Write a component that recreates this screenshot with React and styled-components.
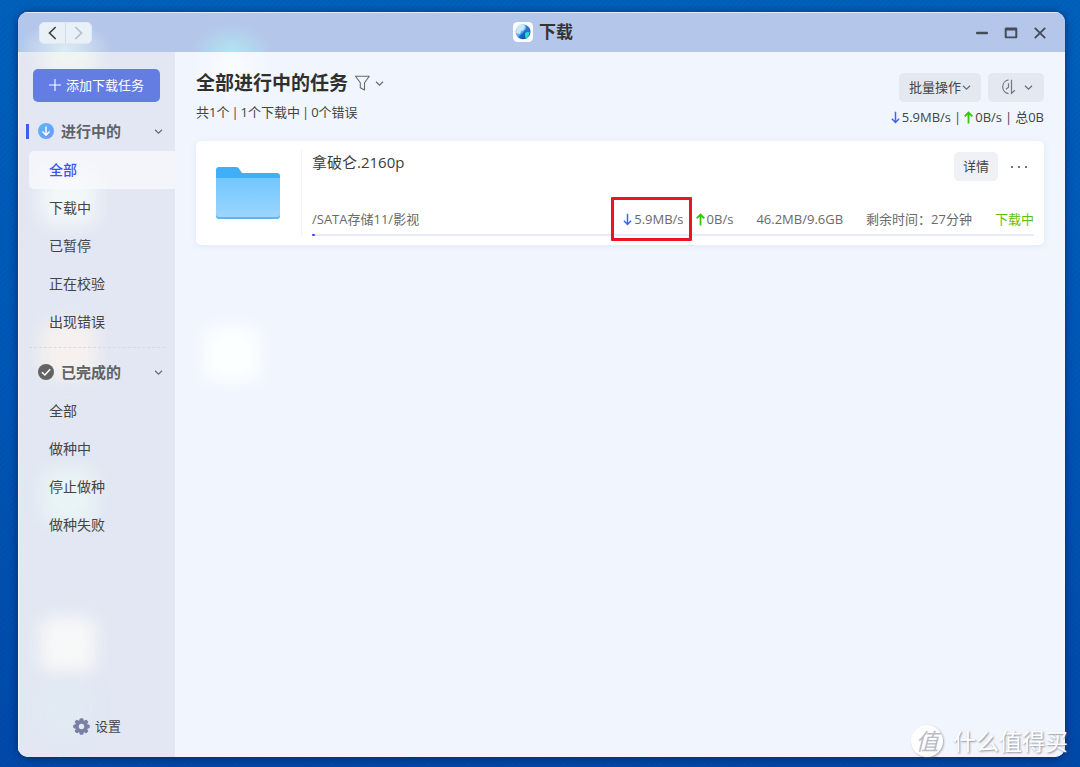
import React, { useState } from 'react';
import styled, { createGlobalStyle } from 'styled-components';

const GlobalStyle = createGlobalStyle`
    * {
        box-sizing: border-box;
    }
    body {
        margin: 0;
        font-family: "Open Sans", "Noto Sans CJK SC", sans-serif;
        font-size: 13px;
        line-height: 20px;
        color: #444;
    }
    button {
        font: inherit;
        color: inherit;
        border: 0;
        padding: 0;
        cursor: pointer;
    }
    a {
        color: inherit;
        text-decoration: none;
    }
    h1, h2, p, ul {
        margin: 0;
        padding: 0;
    }
    svg {
        display: block;
        flex: none;
    }
`

const Desktop = styled.div`
    position: relative;
    display: flex;
    min-height: 100vh;
    padding: 12px 15px 10px 18px;
    background:
        repeating-linear-gradient(135deg, rgba(0, 20, 90, 0.04) 0 2px, transparent 2px 4px),
        linear-gradient(#0061bb, #0057b5 50%, #0049a9);
`

const Window = styled.div`
    flex: 1;
    display: flex;
    flex-direction: column;
    border-radius: 10px;
    overflow: hidden;
    background: #f1f5fe;
    box-shadow: 0 1px 8px rgba(0, 15, 70, 0.6);
`

const TitleBar = styled.header`
    display: grid;
    grid-template-columns: 1fr auto 1fr;
    align-items: center;
    height: 40px;
    padding: 0 18px 0 21px;
    border-top: 1px solid #e3ebf8;
    background:
        radial-gradient(ellipse 40px 28px at 214px 40px, rgba(176, 232, 242, 0.9), transparent),
        radial-gradient(ellipse 46px 28px at 47px 36px, rgba(224, 240, 244, 0.9), transparent),
        #b4c7ea;
`

const NavButtons = styled.div`
    display: flex;
    width: 53px;
    border: 1px solid #dfe8f3;
    border-radius: 5px;
    overflow: hidden;
    background: #e9f1f8;
`

const NavButton = styled.button`
    flex: 1;
    display: flex;
    align-items: center;
    justify-content: center;
    height: 20px;
    background: none;
    color: ${props => props.disabled ? '#b9bec5' : '#444'};
    & + & {
        border-left: 1px solid #d3dce8;
    }
`

const AppTitle = styled.h1`
    display: flex;
    align-items: center;
    gap: 6px;
    padding-bottom: 2px;
    font-size: 17px;
    line-height: 24px;
    font-weight: 600;
    color: #333;
`

const WindowButtons = styled.div`
    display: flex;
    justify-content: flex-end;
    gap: 15px;
    color: #454b5a;
`

const WindowButton = styled.button`
    background: none;
`

const Body = styled.div`
    flex: 1;
    display: flex;
`

const Sidebar = styled.aside`
    position: relative;
    isolation: isolate;
    overflow: hidden;
    display: flex;
    flex-direction: column;
    width: 157px;
    flex: none;
    padding-top: 17px;
    border-left: 1px solid #f2f5fb;
    background: #e2e7f3;
`

// soft light spots of the wallpaper icons behind the frosted panels
const Glow = styled.span`
    position: absolute;
    z-index: -1;
    left: ${props => props.$left}px;
    top: ${props => props.$top}px;
    width: 56px;
    height: 56px;
    border-radius: 12px;
    background: ${props => props.$color};
    filter: blur(9px);
`

const AddButton = styled.button`
    display: flex;
    align-items: center;
    justify-content: center;
    gap: 5px;
    height: 33px;
    margin: 0 15px 10px 14px;
    padding-bottom: 2px;
    border-radius: 5px;
    background: #637de2;
    color: #fff;
`

const GroupHeader = styled.button`
    position: relative;
    display: flex;
    align-items: center;
    gap: 7px;
    width: 100%;
    height: 38px;
    padding: 0 12px 0 19px;
    background: none;
    font-size: 15px;
    font-weight: 700;
    color: #626262;
    ${props => props.$current && `
        &::before {
            content: "";
            position: absolute;
            left: 7px;
            top: 12px;
            width: 3px;
            height: 15px;
            background: #3f5bf6;
        }
    `}
    & > svg:last-child {
        margin-left: auto;
    }
`

const ItemList = styled.ul`
    list-style: none;
    padding: 1px 0 0 10px;
`

const Item = styled.a`
    display: block;
    padding-left: 20px;
    border-radius: 5px 0 0 5px;
    font-size: 14px;
    line-height: 38px;
    font-weight: ${props => props.$active ? 500 : 400};
    color: ${props => props.$active ? '#3d55f5' : '#444'};
    background: ${props => props.$active ? 'rgba(248, 250, 252, 0.75)' : 'none'};
`

const Divider = styled.hr`
    width: 136px;
    margin: 6px 0 5px 10px;
    border: 0;
    border-top: 1px dashed #d6d9e0;
`

const SettingsButton = styled.button`
    display: flex;
    align-items: center;
    justify-content: center;
    gap: 5px;
    margin: auto 0 21px;
    background: none;
`

const Main = styled.main`
    position: relative;
    isolation: isolate;
    flex: 1;
    min-width: 0;
    padding: 17px 21px;
    background:
        radial-gradient(ellipse 40px 34px at 57px 16px, rgba(250, 254, 255, 0.9), transparent),
        #f1f5fe;
`

const PageHead = styled.div`
    display: flex;
    justify-content: space-between;
    height: 72px;
`

const HeadLeft = styled.div`
    display: flex;
    flex-direction: column;
    gap: 5px;
`

const PageTitle = styled.h2`
    font-size: 19px;
    line-height: 28px;
    font-weight: 700;
    color: #2f2f2f;
`

const TitleRow = styled.div`
    display: flex;
    align-items: center;
    gap: 6px;
`

const FilterButton = styled.button`
    display: flex;
    align-items: center;
    gap: 4px;
    background: none;
`

const HeadRight = styled.div`
    display: flex;
    flex-direction: column;
    align-items: flex-end;
    gap: 5px;
    padding-top: 4px;
`

const ButtonRow = styled.div`
    display: flex;
    gap: 7px;
`

const GreyButton = styled.button`
    display: flex;
    align-items: center;
    justify-content: center;
    gap: ${props => props.$gap || 1}px;
    height: 29px;
    padding: 0 ${props => props.$pad || 9}px 1px;
    border-radius: 5px;
    background: ${props => props.$light ? '#f0f1f6' : '#e4e8f1'};
`

const Stats = styled.p`
    display: flex;
    gap: ${props => props.$gap}px;
`

const Speed = styled.span`
    position: relative;
    display: flex;
    align-items: center;
    gap: 2px;
`

const Card = styled.article`
    display: flex;
    gap: 21px;
    padding: 9px 10px 9px 20px;
    border-radius: 5px;
    background: #fff;
    box-shadow: 0 1px 6px rgba(90, 115, 170, 0.1);
    & > svg {
        align-self: center;
    }
`

const TaskBody = styled.div`
    flex: 1;
    display: flex;
    flex-direction: column;
    justify-content: space-between;
    min-height: 86px;
    padding-left: 10px;
    border-left: 1px solid #f0f2f6;
`

const TaskTop = styled.div`
    display: flex;
    justify-content: space-between;
    align-items: flex-start;
    padding-top: 2px;
`

const TaskName = styled.h2`
    font-size: 15px;
    line-height: 20px;
    font-weight: 400;
    color: #3c3c3c;
`

const TaskActions = styled.div`
    display: flex;
    align-items: center;
    gap: 12px;
`

const MoreButton = styled.button`
    background: none;
    padding-right: 6px;
`

const TaskInfo = styled.div`
    display: flex;
    gap: 23px;
    margin-bottom: 5px;
    color: #6a6a6a;
`

const Path = styled.span`
    flex: 1;
`

const Speeds = styled.span`
    display: flex;
    gap: 12px;
`

const State = styled.span`
    color: #5fbf0c;
`

const Highlight = styled.span`
    position: absolute;
    inset: -12px -8px -12px -12px;
    border: 3px solid #ec1420;
    border-radius: 1px;
    pointer-events: none;
`

const Track = styled.div`
    height: 2px;
    border-radius: 1px;
    background: #e6ebf4;
`

const Bar = styled.div`
    height: 2px;
    min-width: 3px;
    border-radius: 1px;
    background: #3448fa;
`

const Watermark = styled.div`
    position: absolute;
    right: 12px;
    bottom: 10px;
    display: flex;
    align-items: center;
    gap: 10px;
    font-size: 23px;
    line-height: 32px;
    color: #fff;
    text-shadow: 1px 1px 2px rgba(90, 95, 110, 0.7);
    pointer-events: none;
`

const Seal = styled.span`
    width: 32px;
    height: 32px;
    border-radius: 50%;
    background: #fff;
    box-shadow: 1px 1px 2px rgba(90, 95, 110, 0.5);
    color: #b9bcc5;
    font-family: "Noto Sans CJK SC", sans-serif;
    font-size: 23px;
    font-style: italic;
    line-height: 30px;
    text-align: center;
    text-shadow: none;
`

const Chevron = () => (
    <svg width="9" height="9" viewBox="0 0 9 9" fill="none" stroke="#656b7d" strokeWidth="1.2">
        <path d="M1 2.8L4.5 6.2L8 2.8" />
    </svg>
)

const Arrow = ({ up }) => (
    <svg width="9" height="13" viewBox="0 0 9 13" fill="none" stroke={up ? '#35c50b' : '#3d63fb'} strokeWidth={up ? 1.8 : 1.5}>
        {up ? <path d="M4.5 12.5V1.6M.7 5.4L4.5 1.5L8.3 5.4" /> : <path d="M4.5 .8V11.4M.9 7.8L4.5 11.5L8.1 7.8" />}
    </svg>
)

const GlobeIcon = () => (
    <svg width="20" height="20" viewBox="0 0 20 20">
        <defs>
            <linearGradient id="globe" x1="0" y1="0" x2="1" y2="1">
                <stop offset="0" stopColor="#b8e1fb" />
                <stop offset=".48" stopColor="#5fadea" />
                <stop offset=".55" stopColor="#1769cb" />
                <stop offset="1" stopColor="#133f9e" />
            </linearGradient>
        </defs>
        <rect width="20" height="20" rx="4.5" fill="#fbfcfe" />
        <circle cx="10" cy="9.8" r="7.5" fill="url(#globe)" />
        <path d="M3.6 6L7 3L11 2.8L12 5L11 8L8 9L7 12L3.2 11Z" fill="#d6edfc" opacity=".85" />
        <path d="M12.5 3Q17 5 16.8 11Q14 13 12.5 11Q14.5 8 12.5 3Z" fill="#2b74d2" />
        <path d="M12 11Q14 9.5 16.6 10.4L15.8 14L13.4 17Q11.5 15 12 11Z" fill="#27d6c9" />
    </svg>
)

const FolderIcon = () => (
    <svg width="64" height="52" viewBox="0 0 64 52">
        <defs>
            <linearGradient id="folder" x1="0" y1="0" x2="0" y2="1">
                <stop offset="0" stopColor="#72c7ff" />
                <stop offset="1" stopColor="#9bd5ff" />
            </linearGradient>
        </defs>
        <path d="M0 3Q0 0 3 0H20.5Q22 0 23 1.5L26 6H61Q64 6 64 9V20H0Z" fill="#40affa" />
        <path d="M0 11H64V49Q64 52 61 52H3Q0 52 0 49Z" fill="#5eb5ef" />
        <path d="M0 11H64V47Q64 50 61 50H3Q0 50 0 47Z" fill="url(#folder)" />
    </svg>
)

const GearIcon = () => (
    <svg width="17" height="17" viewBox="0 0 17 17" fill="#7a80a4">
        {[0, 45, 90, 135].map(angle => (
            <rect key={angle} x="6.5" y=".2" width="4" height="16.6" rx="1.4" transform={`rotate(${angle} 8.5 8.5)`} />
        ))}
        <circle cx="8.5" cy="8.5" r="6.4" />
        <circle cx="8.5" cy="8.5" r="2.7" fill="#e3e8f3" />
    </svg>
)

const active = ['全部', '下载中', '已暂停', '正在校验', '出现错误'];
const finished = ['全部', '做种中', '停止做种', '做种失败'];

function Group({ title, icon, items, prefix, selected, onSelect }) {
    const [open, setOpen] = useState(true);
    return (
        <div>
            <GroupHeader $current={selected.startsWith(prefix)} aria-expanded={open} onClick={() => setOpen(!open)}>
                {icon}
                <span>{title}</span>
                <Chevron />
            </GroupHeader>
            {open && (
                <ItemList>
                    {items.map((name, i) => (
                        <li key={name}>
                            <Item
                                href={`#${prefix}${i}`}
                                $active={selected === `${prefix}${i}`}
                                onClick={() => onSelect(`${prefix}${i}`)}
                            >
                                {name}
                            </Item>
                        </li>
                    ))}
                </ItemList>
            )}
        </div>
    )
}

function Task({ name, path, done, total, progress }) {
    return (
        <Card>
            <FolderIcon />
            <TaskBody>
                <TaskTop>
                    <TaskName>{name}</TaskName>
                    <TaskActions>
                        <GreyButton $light>详情</GreyButton>
                        <MoreButton aria-label="更多">
                            <svg width="18" height="4" viewBox="0 0 18 4" fill="#555">
                                <circle cx="2" cy="2" r="1.1" />
                                <circle cx="9" cy="2" r="1.1" />
                                <circle cx="16" cy="2" r="1.1" />
                            </svg>
                        </MoreButton>
                    </TaskActions>
                </TaskTop>
                <div>
                    <TaskInfo>
                        <Path>{path}</Path>
                        <Speeds>
                            <Speed><Arrow />5.9MB/s<Highlight /></Speed>
                            <Speed><Arrow up />0B/s</Speed>
                        </Speeds>
                        <span>{done}/{total}</span>
                        <span>剩余时间：27分钟</span>
                        <State>下载中</State>
                    </TaskInfo>
                    <Track role="progressbar" aria-label={name} aria-valuenow={progress}>
                        <Bar style={{ width: `${progress}%` }} />
                    </Track>
                </div>
            </TaskBody>
        </Card>
    )
}

export default function App() {
    const [selected, setSelected] = useState('active0');

    return (
        <Desktop>
            <GlobalStyle />
            <Window>
                <TitleBar>
                    <NavButtons>
                        <NavButton aria-label="后退">
                            <svg width="9" height="14" viewBox="0 0 9 14" fill="none" stroke="currentColor" strokeWidth="1.7">
                                <path d="M7.7 1L1.5 7L7.7 13" />
                            </svg>
                        </NavButton>
                        <NavButton aria-label="前进" disabled>
                            <svg width="9" height="14" viewBox="0 0 9 14" fill="none" stroke="currentColor" strokeWidth="1.7">
                                <path d="M1.3 1L7.5 7L1.3 13" />
                            </svg>
                        </NavButton>
                    </NavButtons>
                    <AppTitle><GlobeIcon />下载</AppTitle>
                    <WindowButtons>
                        <WindowButton aria-label="最小化">
                            <svg width="14" height="14" viewBox="0 0 14 14"><rect x="1" y="5.7" width="12" height="2.6" rx="1" fill="currentColor" /></svg>
                        </WindowButton>
                        <WindowButton aria-label="最大化">
                            <svg width="14" height="14" viewBox="0 0 14 14" fill="currentColor">
                                <path fillRule="evenodd" d="M2 1.5H12Q13.3 1.5 13.3 2.8V11Q13.3 12.3 12 12.3H2Q.7 12.3 .7 11V2.8Q.7 1.5 2 1.5ZM2.7 4.5V10.4H11.3V4.5Z" />
                            </svg>
                        </WindowButton>
                        <WindowButton aria-label="关闭">
                            <svg width="14" height="14" viewBox="0 0 14 14" fill="none" stroke="currentColor" strokeWidth="1.9">
                                <path d="M1.8 1.8L12.2 12.2M12.2 1.8L1.8 12.2" />
                            </svg>
                        </WindowButton>
                    </WindowButtons>
                </TitleBar>
                <Body>
                    <Sidebar>
                        <Glow $left={22} $top={-32} $color="#f0f4f2" />
                        <Glow $left={22} $top={118} $color="#f2f7f8" />
                        <Glow $left={22} $top={270} $color="#f6f1ef" />
                        <Glow $left={22} $top={416} $color="#e8f4f5" />
                        <Glow $left={21} $top={565} $color="#f7f8f8" />
                        <Glow $left={19} $top={630} $color="#e1eaf3" />
                        <AddButton>
                            <svg width="12" height="12" viewBox="0 0 12 12" stroke="#fff" strokeWidth="1.1"><path d="M6 0V12M0 6H12" /></svg>
                            添加下载任务
                        </AddButton>
                        <Group
                            title="进行中的"
                            prefix="active"
                            items={active}
                            selected={selected}
                            onSelect={setSelected}
                            icon={
                                <svg width="16" height="16" viewBox="0 0 16 16" fill="none" stroke="#fff" strokeWidth="1.4">
                                    <defs>
                                        <linearGradient id="down" x1="0" y1="0" x2="1" y2="1">
                                            <stop offset="0" stopColor="#57b9fa" />
                                            <stop offset="1" stopColor="#7196fb" />
                                        </linearGradient>
                                    </defs>
                                    <circle cx="8" cy="8" r="8" fill="url(#down)" stroke="none" />
                                    <path d="M8 3.4V12M4.4 8.6L8 12.2L11.6 8.6" />
                                </svg>
                            }
                        />
                        <Divider />
                        <Group
                            title="已完成的"
                            prefix="finished"
                            items={finished}
                            selected={selected}
                            onSelect={setSelected}
                            icon={
                                <svg width="16" height="16" viewBox="0 0 16 16" fill="none" stroke="#fff" strokeWidth="1.5">
                                    <circle cx="8" cy="8" r="8" fill="#636363" stroke="none" />
                                    <path d="M3.9 8.2L6.9 11L12.2 5.3" />
                                </svg>
                            }
                        />
                        <SettingsButton><GearIcon />设置</SettingsButton>
                    </Sidebar>
                    <Main>
                        <Glow $left={29} $top={274} $color="#fcffff" />
                        <PageHead>
                            <HeadLeft>
                                <TitleRow>
                                    <PageTitle>全部进行中的任务</PageTitle>
                                    <FilterButton aria-label="筛选">
                                        <svg width="17" height="16" viewBox="0 0 17 16" fill="none" stroke="#686868" strokeWidth="1.1" strokeLinejoin="round">
                                            <path d="M1.5 1.2H15.3L10.5 7.8V15L6.3 12.7V7.8Z" />
                                        </svg>
                                        <Chevron />
                                    </FilterButton>
                                </TitleRow>
                                <Stats $gap={2}>
                                    <span>共1个</span>
                                    <span>|</span>
                                    <span>1个下载中</span>
                                    <span>|</span>
                                    <span>0个错误</span>
                                </Stats>
                            </HeadLeft>
                            <HeadRight>
                                <ButtonRow>
                                    <GreyButton $pad={10}>批量操作<Chevron /></GreyButton>
                                    <GreyButton $gap={7} $pad={11} aria-label="计划">
                                        <svg width="18" height="16" viewBox="0 0 18 16" fill="none" stroke="#747780" strokeWidth="1.2">
                                            <path d="M9.5 .9A7 7 0 0 0 9.5 14.7M9.5 4.3V8.2L7 10.2M12.5 .8V14.4L15.8 11.2" />
                                        </svg>
                                        <Chevron />
                                    </GreyButton>
                                </ButtonRow>
                                <Stats $gap={3}>
                                    <Speed><Arrow />5.9MB/s</Speed>
                                    <span>|</span>
                                    <Speed><Arrow up />0B/s</Speed>
                                    <span>|</span>
                                    <span>总0B</span>
                                </Stats>
                            </HeadRight>
                        </PageHead>
                        <Task name="拿破仑.2160p" path="/SATA存储11/影视" done="46.2MB" total="9.6GB" progress={0.47} />
                    </Main>
                </Body>
            </Window>
            <Watermark><Seal>值</Seal>什么值得买</Watermark>
        </Desktop>
    )
}
